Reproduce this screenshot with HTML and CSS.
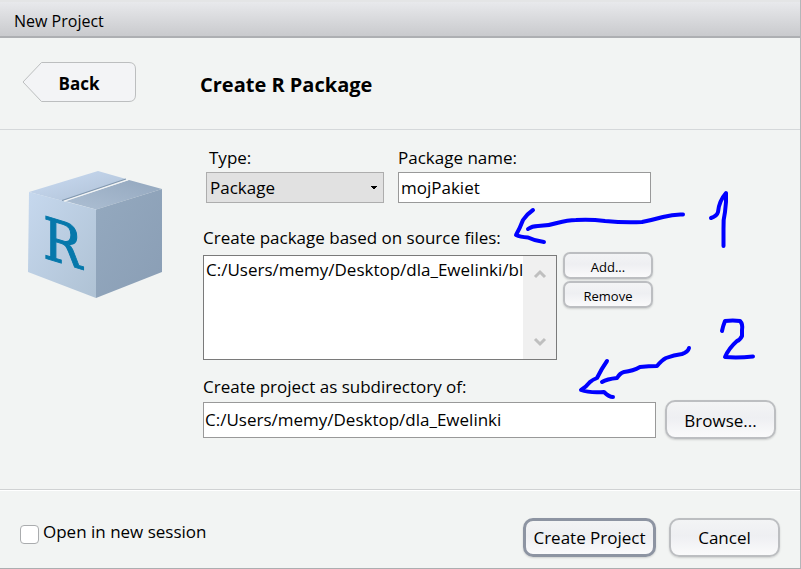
FILE: index.html
```html
<!DOCTYPE html>
<html lang="en">
<head>
<meta charset="utf-8">
<title>New Project</title>
<link rel="stylesheet" href="styles.css">
</head>
<body>
<main class="dialog">
  <div class="titlebar">New Project</div>
  <header class="header">
    <button class="back" type="button">
      <svg class="back-shape" viewBox="0 0 114 40" aria-hidden="true"><path d="M19.500 .5H107Q113.500 .5 113.500 7V33Q113.500 39.500 107 39.500H19.500L1 20Z" fill="#f3f4f6" stroke="#bcbebf"/></svg>
      <span class="back-text">Back</span>
    </button>
    <h1 class="heading">Create R Package</h1>
  </header>
  <section class="content">
    <svg class="package" viewBox="0 0 136 130" aria-hidden="true">
      <defs>
        <linearGradient id="front" x1="0" y1="0" x2="1" y2="1"><stop offset="0" stop-color="#c6d8ee"/><stop offset="1" stop-color="#afc2d4"/></linearGradient>
        <linearGradient id="side" x1="0" y1="0" x2="1" y2="1"><stop offset="0" stop-color="#94a9bf"/><stop offset="1" stop-color="#8a9eb5"/></linearGradient>
        <linearGradient id="flap" x1="0" y1="0" x2="1" y2="1"><stop offset="0" stop-color="#cbdcf3"/><stop offset="1" stop-color="#aec0d5"/></linearGradient>
        <linearGradient id="flap2" x1="0" y1="1" x2="1" y2="0"><stop offset="0" stop-color="#adbfd3"/><stop offset="1" stop-color="#93a7be"/></linearGradient>
      </defs>
      <path d="M1 22L70 1L98 9L35 31Z" fill="url(#flap)"/>
      <path d="M37 31L101 10L134 19L68 39.500Z" fill="url(#flap2)"/>
      <path d="M1 22L68 39.500V128L0 102Z" fill="url(#front)"/>
      <path d="M68 39.500L134 19V102L68 128Z" fill="url(#side)"/>
      <path d="M36 31L100 9.500" stroke="#f2f4f5" stroke-width="1.500"/>
      <path d="M34 30.500L98 9" stroke="#8298af" stroke-width="1.200"/>
      <text class="package-letter" x="15" y="83" transform="skewY(17)">R</text>
    </svg>
    <form class="form">
      <div class="top-fields">
        <div class="field">
          <label class="inset" for="type">Type:</label>
          <select id="type" class="type"><option>Package</option></select>
        </div>
        <div class="field grow">
          <label for="name">Package name:</label>
          <input id="name" class="name" type="text" value="mojPakiet">
        </div>
      </div>
      <label class="line" for="files">Create package based on source files:</label>
      <div class="file-row">
        <div class="list">
          <select id="files" class="files" size="4"><option>C:/Users/memy/Desktop/dla_Ewelinki/bl</option></select>
          <div class="scroll" aria-hidden="true">
            <svg viewBox="0 0 14 10"><path d="M2 8L7 3L12 8"/></svg>
            <svg viewBox="0 0 14 10"><path d="M2 2L7 7L12 2"/></svg>
          </div>
        </div>
        <div class="file-actions">
          <button class="btn small" type="button">Add...</button>
          <button class="btn small" type="button">Remove</button>
        </div>
      </div>
      <label class="line" for="dir">Create project as subdirectory of:</label>
      <div class="dir-row">
        <input id="dir" class="dir" type="text" value="C:/Users/memy/Desktop/dla_Ewelinki">
        <button class="btn browse" type="button">Browse...</button>
      </div>
    </form>
  </section>
  <footer class="footer">
    <input id="session" class="check" type="checkbox">
    <label class="session" for="session">Open in new session</label>
    <button class="btn primary" type="button">Create Project</button>
    <button class="btn cancel" type="button">Cancel</button>
  </footer>
  <svg class="ink" viewBox="510 185 250 220" aria-hidden="true">
    <path d="M528 229Q532 226 538 226Q548 226 557 223Q568 220 576 220Q590 219 605 221Q625 223 642 222Q652 220 663 217Q674 214 683 214.500"/>
    <path d="M533 210Q527 214 523 220Q520 228 516 235Q520 237 528 237.500Q535 241 544 242"/>
    <path d="M711 218Q717 216 718 212Q719 201 726 193Q726.500 202 725 212Q723 220 723.500 229V246"/>
    <path d="M602 382Q607 379 617 378Q620 373 624 372Q633 371 640 367Q649 366 657 366Q662 360 666 358Q674 355 682 354Q688 352 689 348"/>
    <path d="M607 361Q602 368 597 378Q592 380 590 382Q586 387 581 390Q589 393 604 392Q609 397 613 397"/>
    <path d="M722 331Q723 326 725 321Q733 320 740 321Q743 324 742 330V336Q740 340 737 341Q729 348 725 357Q738 358 753 356.500"/>
  </svg>
</main>
</body>
</html>
```
FILE: styles.css
```css
* { box-sizing: border-box; }
body { margin: 0; background: #f2f4f3; }
.dialog {
  position: relative;
  display: flex;
  flex-direction: column;
  min-height: 100vh;
  border-right: 1px solid #b4b6b9;
  border-bottom: 1px solid #acaeb0;
  font: 17px/24px "Open Sans", "Noto Sans", sans-serif;
  color: #000;
}
button, input, select { font: inherit; color: inherit; margin: 0; }
.titlebar {
  height: 38px;
  padding: 7px 14px;
  border-top: 2px solid #e4e5e6;
  border-bottom: 2px solid #adafb2;
  background: linear-gradient(#e8e9ec, #c9cacd);
  font-size: 16px;
}
.header {
  display: flex;
  align-items: center;
  height: 92px;
  padding: 0 22px;
  border-bottom: 1px solid #d5d8da;
}
.back {
  position: relative;
  width: 114px;
  height: 40px;
  margin-bottom: 4px;
  padding: 4px 0 0;
  border: 0;
  background: none;
  font-weight: 700;
}
.back-shape { position: absolute; inset: 0; }
.back-text { position: relative; }
.heading { margin: 2px 0 0 64px; font-size: 20px; line-height: 28px; }
.content {
  display: flex;
  flex: 1;
  padding: 16px 24px 16px 28px;
}
.package { flex: none; width: 136px; height: 130px; margin: 24px 39px 0 0; }
.package-letter {
  font: 58px "DejaVu Serif Condensed", "DejaVu Serif", serif;
  fill: #0678ab;
  stroke: #0678ab;
  stroke-width: 1;
}
.form { flex: 1; min-width: 0; }
.top-fields { display: flex; gap: 14px; padding: 0 125px 0 3px; }
.field { display: flex; flex-direction: column; gap: 2px; }
.grow { flex: 1; min-width: 0; }
.inset { padding-left: 3px; }
.type {
  width: 178px;
  height: 31px;
  padding: 0 3px;
  appearance: none;
  border: 1px solid #adadad;
  border-radius: 0;
  background: linear-gradient(225deg, #000 50%, transparent 0) right 9px top 13px / 4px 4px no-repeat,
    linear-gradient(135deg, #000 50%, transparent 0) right 5px top 13px / 4px 4px no-repeat, #e1e1e1;
}
.name, .dir {
  width: 100%;
  min-width: 0;
  height: 31px;
  padding: 0 2px;
  border: 1px solid #999;
  background: #fff;
}
.line { display: block; }
.top-fields + .line { margin: 23px 0 2px; }
.file-row + .line { margin: 15px 0 1px; }
.file-row { display: flex; gap: 6px; padding-right: 123px; }
.list {
  display: flex;
  flex: 1;
  min-width: 0;
  height: 105px;
  margin-top: 3px;
  border: 1px solid #7a7a7a;
  background: #fff;
}
.files {
  flex: 1;
  min-width: 0;
  padding: 2px 0;
  overflow: hidden;
  border: 0;
  border-radius: 0;
  background: #fff;
}
.files option { padding: 0 2px; }
.scroll {
  display: flex;
  flex-direction: column;
  justify-content: space-between;
  align-items: center;
  width: 33px;
  padding: 13px 0 12px;
  background: #f0f0f0;
}
.scroll svg { width: 14px; height: 10px; fill: none; stroke: #bfbfbf; stroke-width: 3; }
.file-actions { display: flex; flex-direction: column; gap: 2px; width: 90px; }
.btn {
  padding: 2px 0 0;
  border: 2px solid #bcbec1;
  border-radius: 10px;
  background: linear-gradient(#f3f4f5, #eeeff2 45%, #fafafb);
  box-shadow: 0 1px 2px #00000026;
  height: 39px;
}
.small { height: 27px; border-radius: 7px; font-size: 13px; line-height: 20px; }
.dir-row { display: flex; align-items: center; gap: 9px; }
.dir { flex: 1; height: 36px; padding: 0 1px; }
.browse, .cancel { flex: none; width: 111px; }
.footer {
  display: flex;
  align-items: center;
  height: 79px;
  padding: 16px 20px 0;
  border-top: 1px solid #d0d2d3;
  box-shadow: inset 0 1px #fff;
}
.check {
  appearance: none;
  width: 19px;
  height: 19px;
  margin-bottom: 6px;
  border: 1px solid #aaacae;
  border-radius: 4px;
  background: #fff;
}
.session { flex: 1; padding: 0 0 10px 4px; }
.primary { width: 133px; margin-right: 13px; border: 3px solid #8d94a2; }
.ink {
  position: absolute;
  left: 510px;
  top: 185px;
  width: 250px;
  height: 220px;
  pointer-events: none;
  fill: none;
  stroke: #00f;
  stroke-width: 4;
  stroke-linecap: round;
  stroke-linejoin: round;
}
```
